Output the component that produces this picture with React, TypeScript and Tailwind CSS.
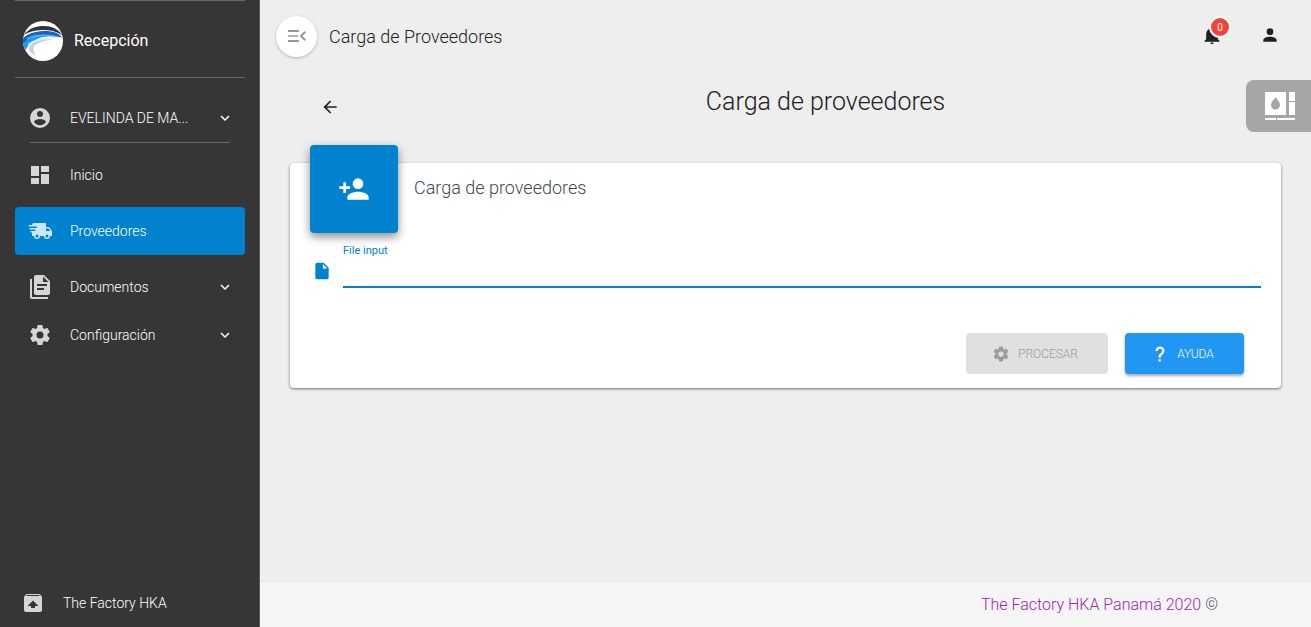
import type { ReactNode } from "react";

const icons = {
  account:
    "M12,19.2C9.5,19.2 7.29,17.92 6,16C6.03,14 10,12.9 12,12.9C14,12.9 17.97,14 18,16C16.71,17.92 14.5,19.2 12,19.2M12,5A3,3 0 0,1 15,8A3,3 0 0,1 12,11A3,3 0 0,1 9,8A3,3 0 0,1 12,5M12,2A10,10 0 0,0 2,12A10,10 0 0,0 12,22A10,10 0 0,0 22,12C22,6.47 17.5,2 12,2Z",
  dashboard: "M13,3V9H21V3M13,21H21V11H13M3,21H11V15H3M3,13H11V3H3V13Z",
  truck:
    "M3,13.5L2.25,12H7.5L6.9,10.5H2L1.25,9H9.05L8.45,7.5H1.11L0.25,6H4A2,2 0 0,1 6,4H18V8H21L24,12V17H22A3,3 0 0,1 19,20A3,3 0 0,1 16,17H12A3,3 0 0,1 9,20A3,3 0 0,1 6,17H4V13.5H3M19,18.5A1.5,1.5 0 0,0 20.5,17A1.5,1.5 0 0,0 19,15.5A1.5,1.5 0 0,0 17.5,17A1.5,1.5 0 0,0 19,18.5M20.5,9.5H18V12H22.46L20.5,9.5M9,18.5A1.5,1.5 0 0,0 10.5,17A1.5,1.5 0 0,0 9,15.5A1.5,1.5 0 0,0 7.5,17A1.5,1.5 0 0,0 9,18.5Z",
  documents:
    "M16,15H9V13H16M19,11H9V9H19M16,0H8C6.9,0 6,0.9 6,2V18C6,19.1 6.9,20 8,20H20C21.1,20 22,19.1 22,18V6L16,0M15,7V1.5L20.5,7M4,4H2V22C2,23.1 2.9,24 4,24H20V22H4V4Z",
  cog: "M12,15.5A3.5,3.5 0 0,1 8.5,12A3.5,3.5 0 0,1 12,8.5A3.5,3.5 0 0,1 15.5,12A3.5,3.5 0 0,1 12,15.5M19.43,12.97C19.47,12.65 19.5,12.33 19.5,12C19.5,11.67 19.47,11.34 19.43,11L21.54,9.37C21.73,9.22 21.78,8.95 21.66,8.73L19.66,5.27C19.54,5.05 19.27,4.96 19.05,5.05L16.56,6.05C16.04,5.66 15.5,5.32 14.87,5.07L14.5,2.42C14.46,2.18 14.25,2 14,2H10C9.75,2 9.54,2.18 9.5,2.42L9.13,5.07C8.5,5.32 7.96,5.66 7.44,6.05L4.95,5.05C4.73,4.96 4.46,5.05 4.34,5.27L2.34,8.73C2.21,8.95 2.27,9.22 2.46,9.37L4.57,11C4.53,11.34 4.5,11.67 4.5,12C4.5,12.33 4.53,12.65 4.57,12.97L2.46,14.63C2.27,14.78 2.21,15.05 2.34,15.27L4.34,18.73C4.46,18.95 4.73,19.03 4.95,18.95L7.44,17.94C7.96,18.34 8.5,18.68 9.13,18.93L9.5,21.58C9.54,21.82 9.75,22 10,22H14C14.25,22 14.46,21.82 14.5,21.58L14.87,18.93C15.5,18.67 16.04,18.34 16.56,17.94L19.05,18.95C19.27,19.03 19.54,18.95 19.66,18.73L21.66,15.27C21.78,15.05 21.73,14.78 21.54,14.63L19.43,12.97Z",
  packageUp:
    "M20.54,5.23C20.83,5.57 21,6 21,6.5V19A2,2 0 0,1 19,21H5A2,2 0 0,1 3,19V6.5C3,6 3.17,5.57 3.46,5.23L4.84,3.55C5.12,3.21 5.53,3 6,3H18C18.47,3 18.88,3.21 19.15,3.55L20.54,5.23M5.12,5H18.87L17.93,4H5.93L5.12,5M12,9.5L6.5,15H10V17H14V15H17.5L12,9.5Z",
  chevron: "M7.41,8.58L12,13.17L16.59,8.58L18,10L12,16L6,10L7.41,8.58Z",
  menuClose:
    "M3,6H14V8H3ZM3,11.3H13V12.7H3ZM3,16H14V18H3ZM19.6,7L21,8.4L17.4,12L21,15.6L19.6,17L14.6,12Z",
  back: "M20,11V13H8L13.5,18.5L12.08,19.92L4.16,12L12.08,4.08L13.5,5.5L8,11H20Z",
  bell: "M21,19V20H3V19L5,17V11C5,7.9 7.03,5.17 10,4.29C10,4.19 10,4.1 10,4A2,2 0 0,1 12,2A2,2 0 0,1 14,4C14,4.1 14,4.19 14,4.29C16.97,5.17 19,7.9 19,11V17L21,19M14,21A2,2 0 0,1 12,23A2,2 0 0,1 10,21",
  person:
    "M12,4A4,4 0 0,1 16,8A4,4 0 0,1 12,12A4,4 0 0,1 8,8A4,4 0 0,1 12,4M12,14C16.42,14 20,15.79 20,18V20H4V18C4,15.79 7.58,14 12,14Z",
  personAdd:
    "M15,14C12.33,14 7,15.33 7,18V20H23V18C23,15.33 17.67,14 15,14M6,10V7H4V10H1V12H4V15H6V12H9V10M15,12A4,4 0 0,0 19,8A4,4 0 0,0 15,4A4,4 0 0,0 11,8A4,4 0 0,0 15,12Z",
  file: "M13,9V3.5L18.5,9M6,2C4.89,2 4,2.89 4,4V20A2,2 0 0,0 6,22H18A2,2 0 0,0 20,20V8L14,2H6Z",
  help: "M10,19H13V22H10V19M12,2C17.35,2.22 19.68,7.62 16.5,11.67C15.67,12.67 14.33,13.33 13.67,14.17C13,15 13,16 13,17H10C10,15.33 10,13.92 10.67,12.92C11.33,11.92 12.67,11.33 13.5,10.67C15.92,8.43 15.32,5.26 12,5A3,3 0 0,0 9,8H6A6,6 0 0,1 12,2Z",
};

function Icon({ name, className }: { name: keyof typeof icons; className: string }) {
  return (
    <svg viewBox="0 0 24 24" fill="currentColor" aria-hidden="true" className={`shrink-0 ${className}`}>
      <path d={icons[name]} />
    </svg>
  );
}

function Logo() {
  return (
    <svg viewBox="0 0 40 40" className="size-10 shrink-0" aria-hidden="true">
      <defs>
        <clipPath id="disc">
          <circle cx="20" cy="20" r="20" />
        </clipPath>
      </defs>
      <g clipPath="url(#disc)">
        <rect width="40" height="40" fill="#fff" />
        <path d="M1 14C6 7 13 5 21 5C29 5 35 8 39 14C33 10 26 8.800 19 9C11 9.300 5 11 1 14Z" fill="#333" />
        <path d="M0 17C6 12 13 10 22 10C30 10 36 12 39 16.500C32 15 25 15 18 16C11 17 5 20 0 24Z" fill="#1266c9" />
        <path d="M4 17C12 13 24 12.500 35 15.500C24 14 13 15.500 4 19Z" fill="#5ba9ee" />
        <path d="M0 22C7 17 14 15.500 22 15C16 17 9 20 5 25C4 27 3 28 2 30Z" fill="#1c9cf5" />
        <path d="M5 23C12 17 25 15.500 36 17C25 17 13 19 6 25Z" fill="#d9efff" />
        <path d="M6 27C8 21 18 17.500 31 18C20 19.500 12 23 10.500 27C10 30 11.500 32 13 34C8 32.500 5.500 30 6 27Z" fill="#cfcfd3" />
      </g>
    </svg>
  );
}

function NavItem({
  icon,
  label,
  active = false,
  expandable = false,
}: {
  icon: keyof typeof icons;
  label: string;
  active?: boolean;
  expandable?: boolean;
}) {
  const body: ReactNode = (
    <>
      <Icon name={icon} className="mr-[18px] size-6 opacity-80" />
      <span className="min-w-0 flex-1 truncate text-left">{label}</span>
      {expandable && <Icon name="chevron" className="size-[18px]" />}
    </>
  );
  const shape = "flex h-12 w-full items-center rounded pr-[11px] pl-[13px]";
  return expandable ? (
    <button type="button" className={shape}>
      {body}
    </button>
  ) : (
    <a href="#" className={`${shape} ${active ? "bg-[#0082cf]" : ""}`}>
      {body}
    </a>
  );
}

function Sidebar() {
  return (
    <aside className="flex w-[260px] shrink-0 flex-col border-r border-[#5c5c5c] bg-[#363636] text-sm font-light text-white">
      <div className="mr-[14px] ml-[15px] flex h-[78px] items-center gap-[11px] border-y border-[#686868] pt-1 pl-2">
        <Logo />
        <span className="text-base font-normal">Recepción</span>
      </div>
      <nav className="pt-4 pr-[14px] pl-[15px]">
        <NavItem icon="account" label="EVELINDA DE MA..." expandable />
        <hr className="mx-[15px] border-[#686868]" />
        <div className="flex flex-col gap-2 pt-2">
          <NavItem icon="dashboard" label="Inicio" />
          <NavItem icon="truck" label="Proveedores" active />
          <div>
            <NavItem icon="documents" label="Documentos" expandable />
            <NavItem icon="cog" label="Configuración" expandable />
          </div>
        </div>
      </nav>
      <a href="#" className="mt-auto flex h-12 items-center gap-[18px] pl-[21px]">
        <Icon name="packageUp" className="size-6 opacity-80" />
        The Factory HKA
      </a>
    </aside>
  );
}

function TopBar() {
  return (
    <header className="flex h-[72px] items-center pr-[31px] pl-4">
      <button
        type="button"
        aria-label="Contraer menú"
        className="flex size-[41px] items-center justify-center rounded-full bg-white text-[#999] shadow-[0_1px_3px_rgba(0,0,0,0.25)]"
      >
        <Icon name="menuClose" className="size-6" />
      </button>
      <span className="ml-3 flex-1 pt-0.5 text-lg font-light">Carga de Proveedores</span>
      <div className="flex gap-[38px] pb-0.5">
        <button type="button" aria-label="Notificaciones" className="relative">
          <Icon name="bell" className="size-5" />
          <span className="absolute -top-[9px] left-[7px] flex size-[22px] items-center justify-center rounded-full border-2 border-white bg-[#f44336] text-[10px] text-white">
            0
          </span>
        </button>
        <button type="button" aria-label="Cuenta">
          <Icon name="person" className="size-5" />
        </button>
      </div>
    </header>
  );
}

function UploadCard() {
  return (
    <section className="mx-[30px] mt-[34px] rounded bg-white pb-3.5 shadow-[0_1px_3px_rgba(0,0,0,0.55)]">
      <div className="flex gap-4 px-5">
        <div className="-mt-[18px] flex size-[88px] items-center justify-center rounded bg-[#0082cf] text-white shadow-[0_4px_10px_rgba(0,0,0,0.45)]">
          <Icon name="personAdd" className="size-8" />
        </div>
        <h2 className="pt-[11px] text-lg font-light text-[#3c4858]">Carga de proveedores</h2>
      </div>
      <div className="mt-2.5 flex items-end pr-5 pl-[22px] text-[#0082cf]">
        <Icon name="file" className="mb-[7px] size-5" />
        <div className="ml-[11px] flex flex-1 flex-col border-b-2 border-[#0082cf]">
          <label htmlFor="file" className="text-[11px] leading-4">
            File input
          </label>
          <input id="file" type="text" readOnly className="h-[27px] w-full outline-none" />
        </div>
      </div>
      <div className="mt-[45px] flex justify-end gap-[17px] pr-[37px] text-xs font-light">
        <button
          type="button"
          disabled
          className="flex h-[41px] w-[142px] items-center justify-center gap-2 rounded bg-[#e0e0e0] pr-1 text-[#9c9c9c]"
        >
          <Icon name="cog" className="size-[18px]" />
          PROCESAR
        </button>
        <button
          type="button"
          className="flex h-[41px] w-[119px] items-center justify-center gap-2 rounded bg-[#2196f3] pr-1 text-white shadow-[0_2px_3px_rgba(0,0,0,0.35)]"
        >
          <Icon name="help" className="size-[18px]" />
          AYUDA
        </button>
      </div>
    </section>
  );
}

function SettingsTab() {
  return (
    <button
      type="button"
      aria-label="Personalizar"
      className="absolute top-20 right-0 flex h-[52px] w-[65px] items-center rounded-l-lg bg-[#a6a6a6] pl-[19px]"
    >
      <svg viewBox="0 0 30 28" className="h-7 w-[30px]" fill="#fff" aria-hidden="true">
        <path d="M0 0H21V23H0ZM24 0H30V9H24ZM24 10H30V23H24ZM0 26H11V28H0ZM12 26H30V28H12Z" />
        <path d="M10.500 5C12 7.500 15 10 15 13A4.500 4.500 0 0 1 6 13C6 10 9 7.500 10.500 5Z" fill="#a6a6a6" />
      </svg>
    </button>
  );
}

export default function App() {
  return (
    <div className="relative flex min-h-screen bg-[#eee] font-['Roboto',sans-serif] text-[#212121]">
      <Sidebar />
      <div className="flex min-w-0 flex-1 flex-col">
        <TopBar />
        <main className="flex-1">
          <div className="flex h-[57px] items-center pl-[60px]">
            <button type="button" aria-label="Volver" className="mt-3">
              <Icon name="back" className="size-5" />
            </button>
            <h1 className="flex-1 pt-0.5 text-center text-[25px] font-light">Carga de proveedores</h1>
          </div>
          <UploadCard />
        </main>
        <footer className="flex h-[46px] items-center justify-end border-t border-[#e7e7e7] bg-[#f5f5f5] pr-[93px] text-base font-light text-[#3c4858]">
          <a href="#" className="mr-1 text-[#9c27b0]">
            The Factory HKA Panamá 2020
          </a>
          ©
        </footer>
      </div>
      <SettingsTab />
    </div>
  );
}
